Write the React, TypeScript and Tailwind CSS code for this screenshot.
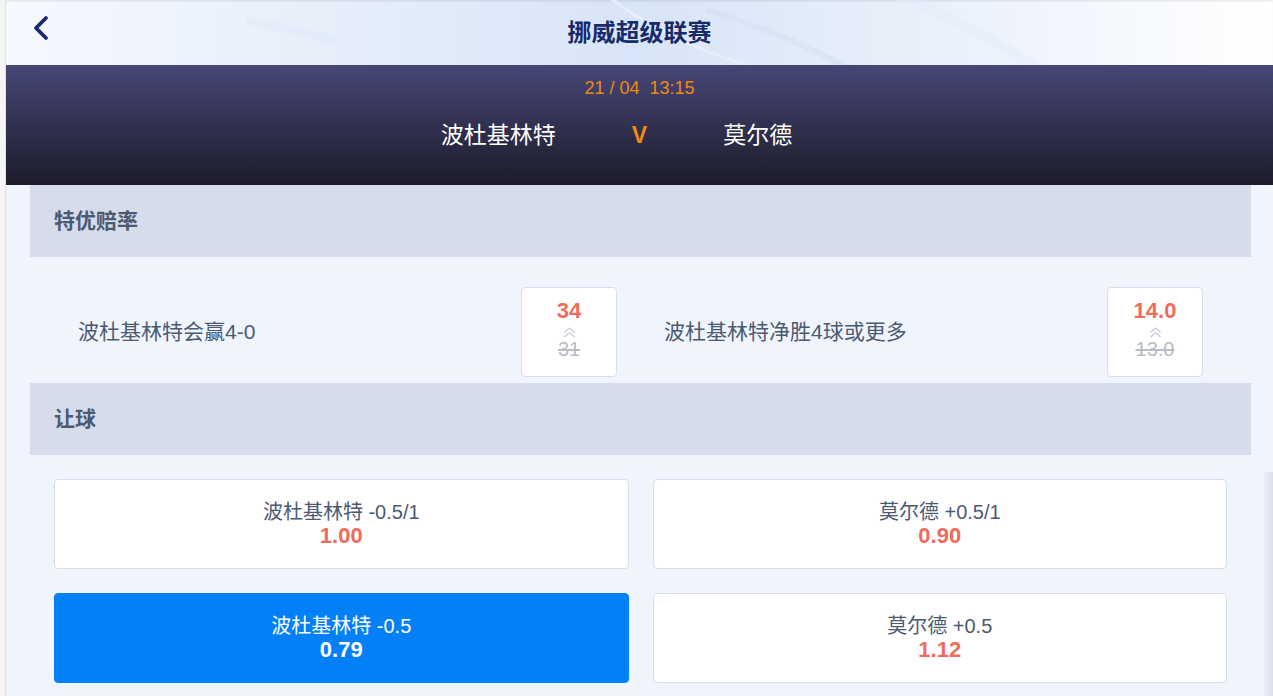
import { ChevronLeft } from "lucide-react";

// 赛事详情 — 特优赔率 / 让球

const font = { fontFamily: '"Liberation Sans", "Noto Sans CJK SC", sans-serif' };

interface Boost { label: string; now: string; was: string }
interface Line { label: string; odds: string; active?: boolean }

const BOOSTS: Boost[] = [
  { label: "波杜基林特会赢4-0", now: "34", was: "31" },
  { label: "波杜基林特净胜4球或更多", now: "14.0", was: "13.0" },
];

const HANDICAP: Line[] = [
  { label: "波杜基林特 -0.5/1", odds: "1.00" },
  { label: "莫尔德 +0.5/1", odds: "0.90" },
  { label: "波杜基林特 -0.5", odds: "0.79", active: true },
  { label: "莫尔德 +0.5", odds: "1.12" },
];

function DoubleUp() {
  return (
    <svg width="13" height="11" viewBox="0 0 13 11" fill="none" stroke="#c6cbd6" strokeWidth="1.3">
      <polyline points="1.5,5.5 6.5,1 11.5,5.5" />
      <polyline points="1.5,10 6.5,5.5 11.5,10" />
    </svg>
  );
}

function SectionTitle({ children }: { children: string }) {
  return (
    <div className="ml-[24px] mr-[22px] flex h-[72px] items-center bg-[#d6dcea] pl-[24px] text-[21px] font-bold text-[#4b5a73]">
      {children}
    </div>
  );
}

export default function App() {
  return (
    <div className="relative flex h-[696px] w-[1273px] overflow-hidden bg-[#eff4fd]" style={font}>
      <div className="w-[6px] shrink-0 border-r border-[#e3e3e3] bg-[#f5f5f5]" />

      <div className="flex min-w-0 flex-1 flex-col">
        {/* 顶部标题栏 */}
        <div className="relative flex h-[65px] items-center justify-center overflow-hidden bg-gradient-to-r from-[#f6f9fe] via-[#d8e4f7] to-white shadow-[inset_0_2px_2px_rgba(0,0,0,0.06)]">
          <svg className="absolute inset-0" width="1267" height="65" viewBox="0 0 1267 65" fill="none">
            <path d="M560 -40 Q 640 40 760 70" stroke="#e6eefb" strokeWidth="3" />
            <path d="M700 10 Q 800 40 860 80" stroke="#cfdcf1" strokeWidth="6" opacity="0.4" />
            <path d="M880 -10 Q 1000 40 1060 90" stroke="#e2ebfa" strokeWidth="10" opacity="0.5" />
            <path d="M240 20 L 330 40" stroke="#dbe5f6" strokeWidth="8" opacity="0.3" />
          </svg>
          <ChevronLeft className="absolute left-[15px] top-[8px] text-[#1b2a6b]" size={40} strokeWidth={2.3} />
          <div className="relative text-[24px] font-bold text-[#172a69]">挪威超级联赛</div>
        </div>

        {/* 对阵信息 */}
        <div className="flex h-[120px] flex-col items-center bg-gradient-to-b from-[#474778] to-[#1c1c2b] pt-[12px]">
          <div className="whitespace-pre text-[18px] leading-[22px] text-[#f08a0c]">21 / 04  13:15</div>
          <div className="mt-[21px] grid w-full grid-cols-[1fr_auto_1fr] items-center gap-x-[76px] text-[23px] leading-[30px] text-white">
            <div className="text-right">波杜基林特</div>
            <div className="font-bold text-[#f08a0c]">V</div>
            <div className="text-left">莫尔德</div>
          </div>
        </div>

        {/* 特优赔率 */}
        <SectionTitle>特优赔率</SectionTitle>
        <div className="ml-[48px] grid h-[126px] grid-cols-[563px_563px] gap-x-[23px] pt-[30px]">
          {BOOSTS.map((b) => (
            <div key={b.label} className="flex h-[90px] items-center justify-between pl-[24px]">
              <span className="text-[21px] text-[#4b5a73]">{b.label}</span>
              <div className="flex h-[90px] w-[96px] flex-col items-center rounded-[4px] border border-[#d7ddeb] bg-white pt-[10px]">
                <span className="text-[22px] font-bold leading-[26px] text-[#f06b5b]">{b.now}</span>
                <span className="mt-[3px]"><DoubleUp /></span>
                <span className="text-[20px] leading-[22px] text-[#b7bcc7] line-through">{b.was}</span>
              </div>
            </div>
          ))}
        </div>

        {/* 让球 */}
        <SectionTitle>让球</SectionTitle>
        <div className="ml-[48px] mr-[46px] grid grid-cols-2 gap-[24px] pt-[24px]">
          {HANDICAP.map((h) => (
            <div
              key={h.label}
              className={`flex h-[90px] flex-col items-center justify-center rounded-[4px] border ${h.active ? "border-[#0380f8] bg-[#0380f8] text-white" : "border-[#d7ddeb] bg-white text-[#4b5a73]"}`}
            >
              <span className="text-[20px] leading-[23px]">{h.label}</span>
              <span className={`text-[22px] font-bold leading-[24px] ${h.active ? "text-white" : "text-[#f06b5b]"}`}>{h.odds}</span>
            </div>
          ))}
        </div>
      </div>

      {/* 右侧浮层阴影 */}
      <div className="absolute right-0 top-[472px] h-[224px] w-[11px] bg-gradient-to-r from-[#eff4fd] to-[#dcdfe9]" />
    </div>
  );
}
